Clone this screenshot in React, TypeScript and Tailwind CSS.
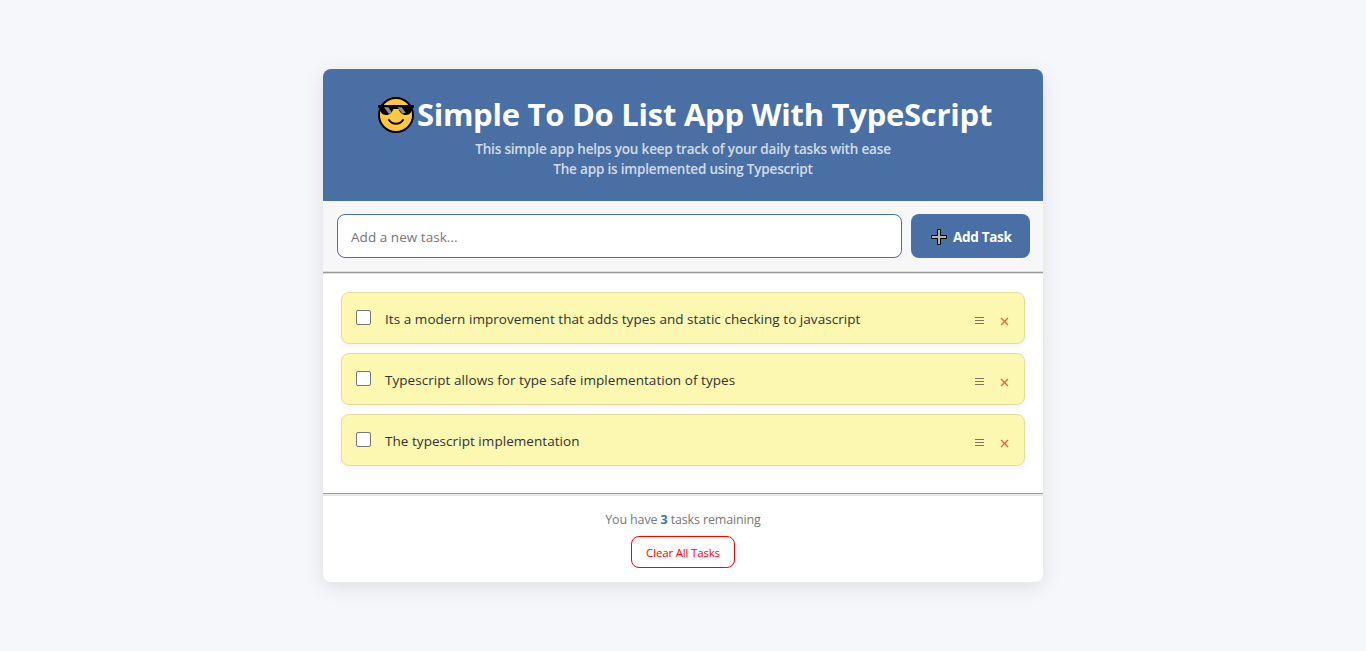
import { useState } from 'react';

const initialTasks: string[] = [
  'Its a modern improvement that adds types and static checking to javascript',
  'Typescript allows for type safe implementation of types',
  'The typescript implementation',
];

function CoolFace() {
  return (
    <svg width="37" height="37" viewBox="0 0 37 37" className="shrink-0">
      <circle cx="18" cy="18" r="17" fill="#ffc83d" stroke="#000" strokeWidth="2" />
      <path d="M0 8h36v2.8h-1.6c-.6 4.6-2.6 7.2-6.4 7.2-4 0-6-2.4-7.4-6h-5.2c-1.4 3.6-3.4 6-7.4 6-3.8 0-5.8-2.6-6.4-7.2H0z" fill="#000" />
      <path d="M6 10.3h4.2l4 5.4-3.4 1zM19.5 10.3h4.2l4 5.4-3.4 1z" fill="#8b8b8b" />
      <path d="M11 23c3.4 5 10.6 5 14 0" fill="none" stroke="#000" strokeWidth="2" strokeLinecap="round" />
    </svg>
  );
}

function PlusMark() {
  return (
    <svg width="16" height="16" viewBox="0 0 16 16" className="mt-px shrink-0">
      <path d="M6.5 .5h3v6h6v3h-6v6h-3v-6h-6v-3h6z" fill="#b4b4b4" stroke="#000" />
    </svg>
  );
}

function Task({ text }: { text: string }) {
  return (
    <li className="flex h-[52px] items-center rounded-lg border border-[#e2dd9d] bg-[#fcf7b1] px-[14px] shadow-[0_2px_5px_rgba(0,0,0,0.06)]">
      <input
        type="checkbox"
        className="mb-0.5 size-[15px] shrink-0 appearance-none rounded-[2px] border border-[#767676] bg-white checked:bg-[#4a6fa5]"
      />
      <span className="ml-[14px] flex-1 whitespace-nowrap pt-[3px] text-[13.5px] tracking-[0.05px] text-[#333]">{text}</span>
      <svg width="9" height="9" viewBox="0 0 9 9" className="mt-[5px]" stroke="#777461">
        <path d="M0 1.5h9M0 4.5h9M0 7.5h9" />
      </svg>
      <svg width="9" height="9" viewBox="0 0 9 9" className="ml-4 mr-px mt-[7px]" stroke="#f85a43" strokeWidth="1.3">
        <path d="M1 1l7 7M8 1L1 8" />
      </svg>
    </li>
  );
}

export default function App() {
  const [value, setValue] = useState('');
  return (
    <main className="flex h-[651px] items-center justify-center bg-[#f5f7fa] font-['Open_Sans','Noto_Sans',sans-serif]">
      <div className="flex h-[513px] w-[720px] flex-col overflow-hidden rounded-lg bg-white shadow-[0_5px_20px_rgba(0,0,0,0.1)]">
        <header className="h-[132px] bg-[#4a6fa5] pt-[22px] text-center text-white">
          <h1 className="flex h-[48px] items-center justify-center gap-[2px] pl-1">
            <CoolFace />
            <span className="mb-0.5 whitespace-nowrap text-[31px] font-bold leading-[46px] tracking-[-0.26px]">Simple To Do List App With TypeScript</span>
          </h1>
          <p className="text-[13.5px] font-semibold leading-5 tracking-[-0.18px] opacity-75">
            This simple app helps you keep track of your daily tasks with ease
            <br />
            The app is implemented using Typescript
          </p>
        </header>
        <div className="flex h-[70px] gap-[9px] bg-[#f7f7f7] pl-[14px] pr-[13px] pt-[13px]">
          <input
            value={value}
            onChange={(e) => setValue(e.target.value)}
            placeholder="Add a new task..."
            className="h-11 min-w-0 flex-1 rounded-lg border border-[#4a6fa5] bg-white px-[13px] pt-0.5 text-[13.5px] tracking-[0.04px] placeholder:text-[#757575]"
          />
          <button className="flex h-11 w-[119px] items-center rounded-lg bg-[#4a6fa5] pl-5 text-white">
            <PlusMark />
            <span className="ml-[6px] whitespace-nowrap pt-0.5 text-[13.5px] font-bold tracking-[-0.3px]">Add Task</span>
          </button>
        </div>
        <div className="h-[3px] border-y border-y-[#e0e0e0] bg-[#9a9a9a]" />
        <ul className="flex h-[219px] flex-col gap-[9px] px-[18px] pt-[18px]">
          {initialTasks.map((t) => (
            <Task key={t} text={t} />
          ))}
        </ul>
        <div className="h-[3px] border-b border-t border-b-[#e4e4e4] border-t-[#9a9a9a] bg-[#eeeeee]" />
        <footer className="flex flex-col items-center pt-[14px]">
          <p className="whitespace-nowrap text-[12.5px] leading-5 tracking-[-0.14px] text-[#777]">
            You have <b className="text-[#4a6fa5]">3</b> tasks remaining
          </p>
          <button className="mt-[6px] h-8 w-[104px] whitespace-nowrap rounded-lg border border-[#ff0000] pt-0.5 text-[11.5px] tracking-[-0.18px] text-[#ff0000]">
            Clear All Tasks
          </button>
        </footer>
      </div>
    </main>
  );
}
